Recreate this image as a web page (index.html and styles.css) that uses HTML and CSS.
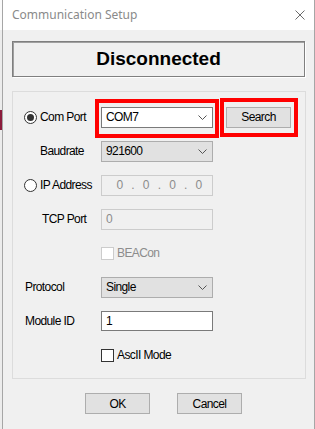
FILE: index.html
```html
<!DOCTYPE html>
<html lang="en">
<head>
  <meta charset="UTF-8" />
  <title>Communication Setup</title>
  <link rel="stylesheet" href="styles.css">
</head>
<body>
  <div class="edge">
    <div class="edge-top"></div>
    <div class="edge-mark"></div>
  </div>
  <div class="window">
    <div class="titlebar">
      <span class="title">Communication Setup</span>
      <svg class="close" width="10" height="10" viewBox="0 0 10 10">
        <path d="M0.5 0.5 L9.5 9.5 M9.5 0.5 L0.5 9.5" stroke="#6b6b6b" stroke-width="1" fill="none"/>
      </svg>
    </div>

    <div class="client">
      <div class="status">Disconnected</div>

      <div class="group">
        <!-- Com Port -->
        <label class="cell radio-label"><span class="radio checked"></span>Com Port</label>
        <div class="mark mark-combo">
          <div class="combo white">COM7<svg class="arrow" width="9" height="5" viewBox="0 0 9 5"><polyline points="0.5,0.5 4.5,4.5 8.5,0.5" fill="none" stroke="#555"/></svg></div>
        </div>
        <div class="mark mark-btn"><button class="btn search">Search</button></div>

        <!-- Baudrate -->
        <span class="cell sub-label">Baudrate</span>
        <div class="combo">921600<svg class="arrow" width="9" height="5" viewBox="0 0 9 5"><polyline points="0.5,0.5 4.5,4.5 8.5,0.5" fill="none" stroke="#555"/></svg></div>
        <span></span>

        <!-- IP Address -->
        <label class="cell radio-label"><span class="radio"></span>IP Address</label>
        <div class="field disabled ip"><span>0</span><span>.</span><span>0</span><span>.</span><span>0</span><span>.</span><span>0</span></div>
        <span></span>

        <!-- TCP Port -->
        <span class="cell sub-label tcp">TCP Port</span>
        <div class="field disabled">0</div>
        <span></span>

        <!-- BEACon -->
        <span></span>
        <label class="check-label disabled-text"><span class="check disabled-box"></span>BEACon</label>
        <span></span>

        <!-- Protocol -->
        <span class="cell plain-label">Protocol</span>
        <div class="combo">Single<svg class="arrow" width="9" height="5" viewBox="0 0 9 5"><polyline points="0.5,0.5 4.5,4.5 8.5,0.5" fill="none" stroke="#555"/></svg></div>
        <span></span>

        <!-- Module ID -->
        <span class="cell plain-label">Module ID</span>
        <div class="field">1</div>
        <span></span>

        <!-- AscII Mode -->
        <span></span>
        <label class="check-label"><span class="check"></span>AscII Mode</label>
        <span></span>
      </div>

      <div class="buttons">
        <button class="btn">OK</button>
        <button class="btn">Cancel</button>
      </div>
    </div>
  </div>
</body>
</html>
```

FILE: styles.css
```css
body {
  margin: 0;
  padding: 0;
  display: flex;
  height: 429px;
  overflow: hidden;
  background: #f0f0f0;
  font-family: "Liberation Sans", Arial, sans-serif;
  font-size: 12px;
  letter-spacing: -0.6px;
  color: #000;
}
.edge {
  width: 2px;
  display: flex;
  flex-direction: column;
  background: #ececec;
}
.edge-top {
  height: 30px;
  background: #fafafa;
  margin-bottom: 80px;
}
.edge-mark {
  height: 20px;
  background: #8c1c3c;
}
.window {
  width: 311px;
  border-left: 1px solid #a6a6a6;
  border-right: 1px solid #a6a6a6;
  display: flex;
  flex-direction: column;
}
.titlebar {
  height: 30px;
  background: #ffffff;
  display: flex;
  align-items: center;
  justify-content: space-between;
  padding: 0 9px;
}
.title {
  font-family: "Noto Sans", "Liberation Sans", sans-serif;
  font-size: 12px;
  letter-spacing: 0;
  color: #8a8a8a;
  margin-top: -1px;
}
.close {
  margin-top: -1px;
}
.client {
  flex: 1;
  padding: 11px 8px 0 9px;
}
.status {
  height: 34px;
  width: 291px;
  border: 1px solid #7f7f7f;
  box-shadow: 1px 1px 0 #ffffff, inset 1px 1px 0 #a0a0a0;
  display: flex;
  align-items: center;
  justify-content: center;
  font-weight: bold;
  font-size: 19px;
  letter-spacing: 0;
  margin-bottom: 14px;
}
.group {
  width: 292px;
  height: 278px;
  border: 1px solid #dcdcdc;
  padding: 8px 0 0 0;
  display: grid;
  grid-template-columns: 88px 112px auto;
  grid-template-rows: repeat(8, 34px);
  align-items: center;
}
.cell {
  display: flex;
  align-items: center;
}
.radio-label {
  padding-left: 11px;
}
.sub-label {
  padding-left: 27px;
}
.sub-label.tcp {
  padding-left: 29px;
}
.plain-label {
  padding-left: 12px;
}
.radio {
  width: 11px;
  height: 11px;
  border: 1px solid #333;
  border-radius: 50%;
  background: #fff;
  margin-right: 3px;
  display: flex;
  align-items: center;
  justify-content: center;
}
.radio.checked::after {
  content: "";
  width: 7px;
  height: 7px;
  border-radius: 50%;
  background: #333;
}
.combo {
  height: 19px;
  border: 1px solid #adadad;
  background: #e1e1e1;
  display: flex;
  align-items: center;
  justify-content: space-between;
  padding: 0 5px 0 4px;
}
.combo.white {
  background: #fff;
  border-color: #7a7a7a;
}
.arrow {
  margin-top: 1px;
}
.field {
  height: 18px;
  border: 1px solid #7a7a7a;
  background: #fff;
  display: flex;
  align-items: center;
  padding: 0 4px;
}
.field.disabled {
  background: #f0f0f0;
  border-color: #cccccc;
  color: #8c8c8c;
  height: 19px;
}
.field.ip {
  justify-content: space-around;
  padding: 0 6px 0 10px;
}
.mark {
  position: relative;
}
.mark::after {
  content: "";
  position: absolute;
  border: 4px solid #ff0000;
  pointer-events: none;
}
.mark-combo::after {
  top: -8px;
  left: -6px;
  right: -6px;
  bottom: -10px;
}
.mark-btn {
  margin-left: 13px;
  width: 65px;
}
.mark-btn::after {
  top: -9px;
  left: -6px;
  right: -7px;
  bottom: -9px;
}
.btn {
  width: 65px;
  height: 21px;
  border: 1px solid #adadad;
  background: #e1e1e1;
  font-family: "Liberation Sans", Arial, sans-serif;
  font-size: 12px;
  letter-spacing: -0.6px;
  color: #000;
  padding: 0;
  display: block;
}
.check-label {
  display: flex;
  align-items: center;
}
.check {
  width: 11px;
  height: 11px;
  border: 1px solid #333;
  background: #fff;
  margin-right: 3px;
}
.disabled-box {
  border-color: #cccccc;
}
.disabled-text {
  color: #8c8c8c;
}
.buttons {
  display: flex;
  gap: 27px;
  padding-left: 73px;
  margin-top: 14px;
}
```
